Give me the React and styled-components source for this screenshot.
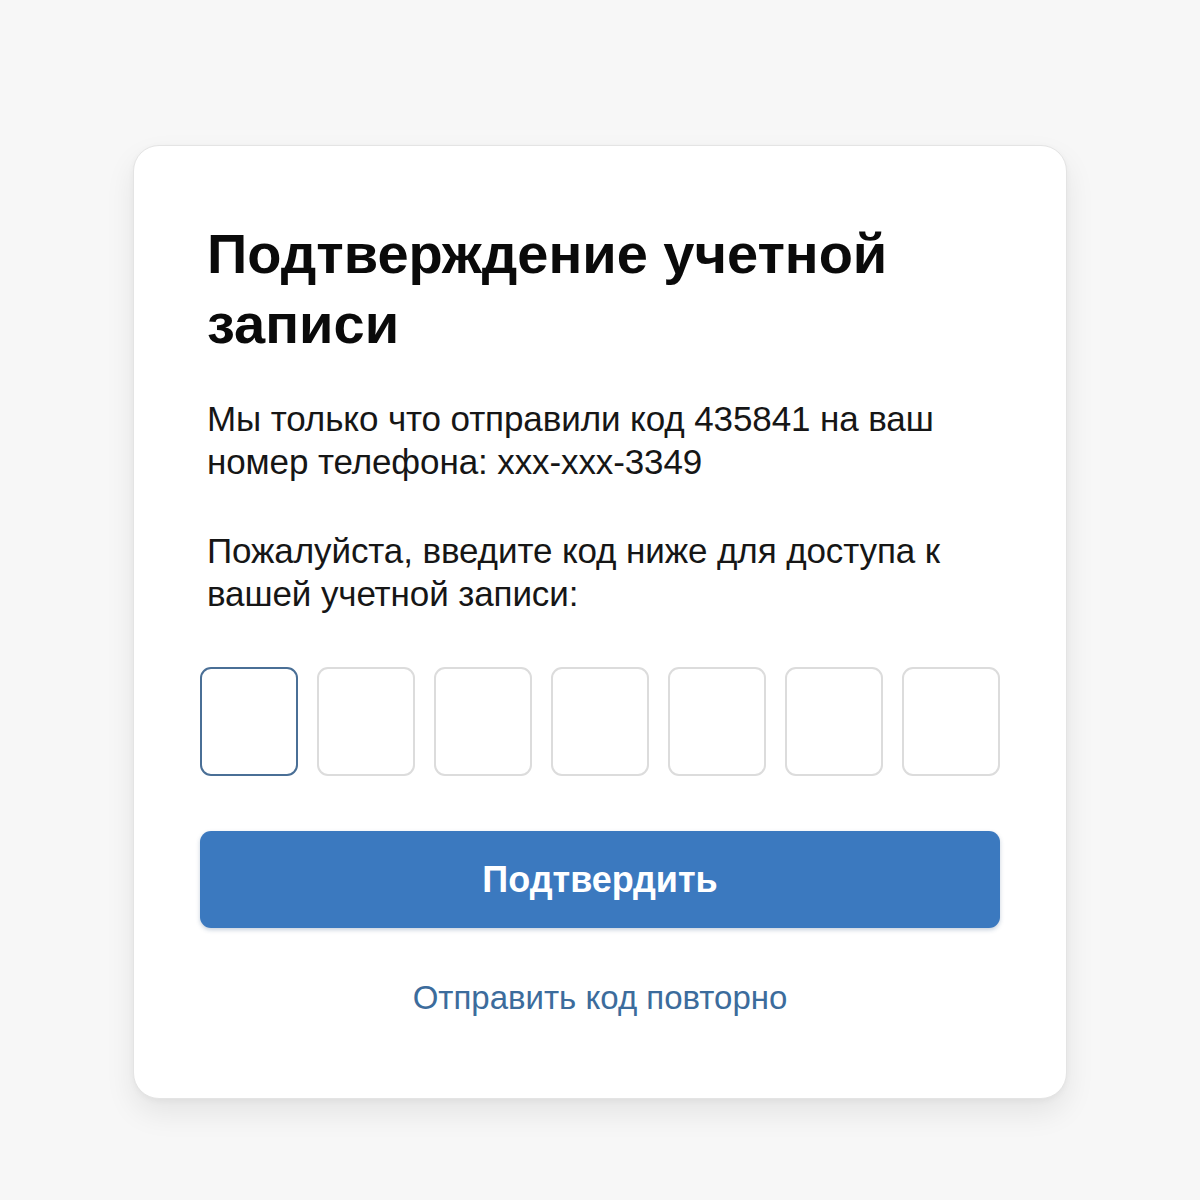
import * as React from 'react';
import styled, { createGlobalStyle } from 'styled-components';

const GlobalStyle = createGlobalStyle`
  html, body {
    margin: 0;
    padding: 0;
    background: #f7f7f7;
  }
  body {
    font-family: 'Liberation Sans', Arial, sans-serif;
  }
`;

const Page = styled.div`
  min-height: 1200px;
  display: flex;
  justify-content: center;
  align-items: flex-start;
  padding-top: 145px;
  box-sizing: border-box;
`;

const Card = styled.section`
  width: 934px;
  box-sizing: border-box;
  padding: 73px 66px 80px;
  background: #ffffff;
  border: 1px solid #e4e4e4;
  border-radius: 26px;
  box-shadow: 0 14px 30px rgba(0, 0, 0, 0.08), 0 2px 6px rgba(0, 0, 0, 0.04);
`;

const Title = styled.h1`
  margin: 0 0 38px;
  padding-left: 7px;
  font-size: 56px;
  line-height: 70px;
  font-weight: 700;
  color: #0a0a0a;
`;

const Text = styled.p`
  margin: 0 0 ${(p) => p.$gap || 0}px;
  padding-left: 7px;
  font-size: 35px;
  line-height: 43px;
  letter-spacing: -0.1px;
  color: #161616;
`;

const CodeRow = styled.div`
  display: grid;
  grid-template-columns: repeat(7, 98px);
  justify-content: space-between;
  margin-bottom: 55px;
`;

const CodeBox = styled.input`
  box-sizing: border-box;
  width: 98px;
  height: 109px;
  border-radius: 11px;
  border: ${(p) => (p.$active ? '2px solid #4a6f96' : '2px solid #dcdcdc')};
  background: #fff;
  font-family: inherit;
  font-size: 40px;
  text-align: center;
  outline: none;
`;

const Button = styled.button`
  display: block;
  width: 100%;
  height: 97px;
  border: none;
  border-radius: 11px;
  background: #3b79bf;
  color: #ffffff;
  font-family: inherit;
  font-size: 36px;
  font-weight: 700;
  box-shadow: 0 2px 4px rgba(30, 70, 120, 0.25);
  cursor: pointer;
  margin-bottom: 50px;
`;

const ResendLink = styled.a`
  display: block;
  text-align: center;
  font-size: 33px;
  line-height: 40px;
  color: #3c6c9c;
  text-decoration: none;
  cursor: pointer;
`;

const App = () => {
  const cells = [0, 1, 2, 3, 4, 5, 6];
  return (
    <>
      <GlobalStyle />
      <Page>
        <Card>
          <Title>
            Подтверждение учетной
            <br />
            записи
          </Title>
          <Text $gap={46}>
            Мы только что отправили код 435841 на ваш
            <br />
            номер телефона: xxx-xxx-3349
          </Text>
          <Text $gap={52}>
            Пожалуйста, введите код ниже для доступа к
            <br />
            вашей учетной записи:
          </Text>
          <CodeRow>
            {cells.map((i) => (
              <CodeBox key={i} maxLength={1} $active={i === 0} />
            ))}
          </CodeRow>
          <Button>Подтвердить</Button>
          <ResendLink>Отправить код повторно</ResendLink>
        </Card>
      </Page>
    </>
  );
};

export default App;
